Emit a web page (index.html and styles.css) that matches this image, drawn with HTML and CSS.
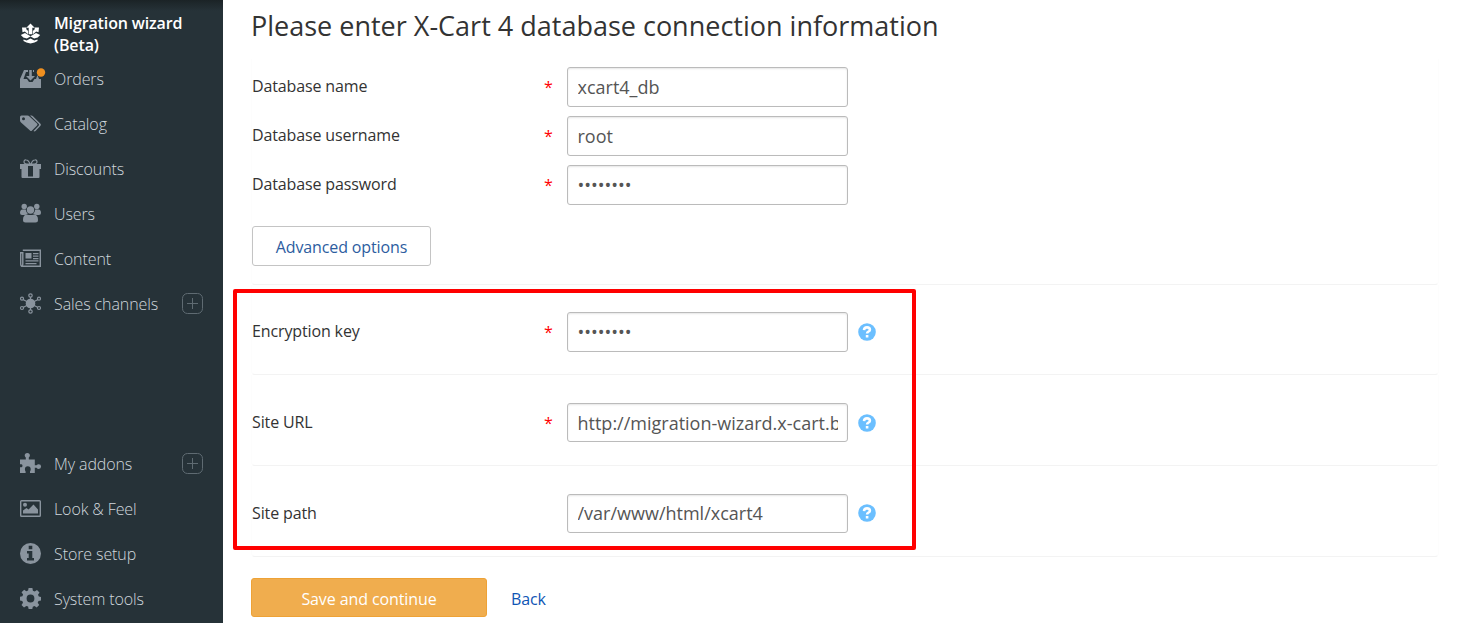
FILE: index.html
```html
<!DOCTYPE html>
<html lang="en">
<head>
<meta charset="utf-8">
<title>Migration wizard</title>
<link rel="stylesheet" href="styles.css">
</head>
<body>
<nav class="sidebar">
  <ul class="menu">
    <li class="item active">
      <svg class="icon" viewBox="0 0 21 21"><path d="M10.500 .5l4.200 4.200h-2.400v6.500H8.700V4.700H6.300zM2 4.500h4.300v1.800l1.800 1.600v3.400L4.800 8.500 2.500 9.300zM19 4.500h-4.300v1.800l-1.800 1.600v3.400l3.300-2.800 2.300.8zM.8 12L5 9.900l5.500 3.400L16 9.900l4.200 2.100-2.500 2.600-3.500.9-3.700-2-3.700 2-3.500-.9zM3.500 16.500l3.200.9 3.800-2 3.800 2 3.200-.9v1.400l-3 1.600-4 1-4-1-3-1.600z"/></svg>
      <span>Migration wizard (Beta)</span>
    </li>
    <li class="item">
      <svg class="icon" viewBox="0 0 21 21"><path d="M4 2h4v2H6l-2.500 7H7l2 3h3.500l2-3H21v9H0v-9z"/><path d="M9.200 2h2.600v6h3.200l-4.500 4.500L6 8h3.200zM13 2h1v2h-1zM17.500 7l1.500 4h-3z"/><circle class="alert" cx="21" cy="4.500" r="4.200"/></svg>
      <span>Orders</span>
    </li>
    <li class="item">
      <svg class="icon" viewBox="0 0 21 21"><path fill-rule="evenodd" d="M0 4q0-1.500 1.500-1.500h6q1 0 2 1l7.500 7q1 1 0 2l-5 5q-1 1-2 0L1 9.500Q0 8.500 0 7.500zM3.500 4.200a1.500 1.500 0 100 3 1.500 1.500 0 000-3z"/><path d="M10 2.500h1.500q.8 0 1.500.8l7.500 7.500q.9 1 0 2L15.500 18q-1 .9-2 0l5.300-5.500q.6-1 0-1.500z"/></svg>
      <span>Catalog</span>
    </li>
    <li class="item">
      <svg class="icon" viewBox="0 0 21 21"><path d="M0 6h21v5h-1.500v8q0 1-1 1H13V8H8v12H2.500q-1 0-1-1v-8H0zM8 18.500h5V20H8z"/><path class="line2" d="M10 6Q4 6.500 4 4t2.200-2Q8.500 2 10 6zM11 6q6 .5 6-2t-2.200-2Q12.500 2 11 6z"/></svg>
      <span>Discounts</span>
    </li>
    <li class="item">
      <svg class="icon" viewBox="0 0 21 21"><circle cx="4.200" cy="3.500" r="2.700"/><circle cx="16.800" cy="3.500" r="2.700"/><circle cx="10.500" cy="7" r="3.700"/><path d="M0 10q0-3.500 2.500-3.500h3.300q.3 3 2 4.300L4.500 12H2q-2 0-2-2zM21 10q0-3.500-2.500-3.500h-3.300q-.3 3-2 4.300l3.300 1.200H19q2 0 2-2zM3 17q0-5.500 4-5.500 3.500 1.200 7 0 4 0 4 5.500 0 2.500-2.500 2.500h-10Q3 19.500 3 17z"/></svg>
      <span>Users</span>
    </li>
    <li class="item">
      <svg class="icon" viewBox="0 0 21 21"><path class="line" d="M2.800 2.300h17.500v16H2.500Q.7 18.300.7 16V4.700h2.100V16q0 2-1 2"/><path d="M5.500 5h6v5.500h-6zM13 5h5.500v1.300H13zM13 7.500h5.500v1.300H13zM13 10h5.500v1.300H13zM5.500 12.300h13v1.300h-13zM5.500 14.900h11v1.300h-11z"/></svg>
      <span>Content</span>
    </li>
    <li class="item">
      <svg class="icon" viewBox="0 0 21 21"><circle cx="10.500" cy="10.500" r="4.800"/><path class="line2" d="M10.500 4v13M3 6.500l15 8M18 6.500l-15 8"/><g class="line2"><circle cx="10.500" cy="2.500" r="1.700"/><circle cx="10.500" cy="18.500" r="1.700"/><circle cx="2" cy="5.700" r="1.500"/><circle cx="19" cy="5.700" r="1.500"/><circle cx="2" cy="15" r="1.500"/><circle cx="19" cy="15" r="1.500"/></g></svg>
      <span>Sales channels</span>
      <svg class="plus" viewBox="0 0 21 21"><rect x=".5" y=".5" width="20" height="20" rx="5"/><path d="M10.500 5v11M5 10.500h11"/></svg>
    </li>
  </ul>
  <ul class="menu bottom">
    <li class="item">
      <svg class="icon" viewBox="0 0 21 21"><path d="M0 6.500h5.800V4.600Q4.700 3.700 4.700 2.600a2.600 2.600 0 115.200 0q0 1.100-1.100 2v1.900h6v5.800h1.700q.9-1.100 2.200-1.100a2.300 2.300 0 110 4.800q-1.300 0-2.200-1.200h-1.700V20H10v-1.500q.7-1 .7-2.300a2.900 2.900 0 10-5.800 0q0 1.300.7 2.300V20H0v-5.700h1.500q1-.4 1-1.600t-1-1.500H0z"/></svg>
      <span>My addons</span>
      <svg class="plus" viewBox="0 0 21 21"><rect x=".5" y=".5" width="20" height="20" rx="5"/><path d="M10.500 5v11M5 10.500h11"/></svg>
    </li>
    <li class="item">
      <svg class="icon" viewBox="0 0 21 21"><rect class="line" x=".7" y="2.700" width="19.600" height="15.600" rx=".8"/><circle cx="5" cy="6.800" r="2"/><path d="M3 15.500v-3l3.500-2.500 2 1.500 5-5 4.500 5v4z"/></svg>
      <span>Look &amp; Feel</span>
    </li>
    <li class="item">
      <svg class="icon" viewBox="0 0 21 21"><path fill-rule="evenodd" d="M10.500 0a10.500 10.500 0 100 21 10.500 10.500 0 000-21zM8.700 2.800h3.600v3.400H8.700zM7 8h5.300v7H14v2.500H7V15h1.700v-4.500H7z"/></svg>
      <span>Store setup</span>
    </li>
    <li class="item">
      <svg class="icon" viewBox="0 0 21 21"><path fill-rule="evenodd" d="M8.600 0h3.800l.5 2.700 1.800.8L17 2l2.500 2.500L18 6.800l.8 1.700 2.200.4v3.700l-2.500.4-.8 1.800 1.500 2.200-2.500 2.500-2.200-1.500-1.700.7-.5 2.300H8.600l-.5-2.400-1.800-.7L4 19.500 1.500 17 3 14.700l-.7-1.800L0 12.500V8.700l2.400-.5.7-1.700L1.500 4.300 4.200 1.700 6.300 3.300l1.800-.7zM10.500 6.600a3.900 3.900 0 100 7.800 3.900 3.900 0 000-7.800z"/></svg>
      <span>System tools</span>
    </li>
  </ul>
</nav>
<main class="content">
  <h1 class="title">Please enter X-Cart 4 database connection information</h1>
  <form class="form">
    <section class="panel database">
      <label class="row"><span class="name">Database name</span><span class="star">*</span><input class="field" type="text" value="xcart4_db"></label>
      <label class="row"><span class="name">Database username</span><span class="star">*</span><input class="field" type="text" value="root"></label>
      <label class="row"><span class="name">Database password</span><span class="star">*</span><input class="field" type="password" value="password"></label>
      <button class="advanced" type="button">Advanced options</button>
    </section>
    <section class="panel key">
      <label class="row"><span class="name">Encryption key</span><span class="star">*</span><input class="field" type="password" value="password"><svg class="help" viewBox="0 0 18 18"><circle cx="9" cy="9" r="8.800"/><path d="M6 7.100Q6.200 4.400 9 4.400t2.900 2.300Q11.900 8 10.400 8.600 9.100 9.200 9.100 10.600M9.100 12v2.500"/></svg></label>
    </section>
    <section class="panel site">
      <label class="row"><span class="name">Site URL</span><span class="star">*</span><input class="field" type="text" value="http://migration-wizard.x-cart.biz"><svg class="help" viewBox="0 0 18 18"><circle cx="9" cy="9" r="8.800"/><path d="M6 7.100Q6.200 4.400 9 4.400t2.900 2.300Q11.900 8 10.400 8.600 9.100 9.200 9.100 10.600M9.100 12v2.500"/></svg></label>
    </section>
    <section class="panel site path">
      <label class="row"><span class="name">Site path</span><span class="star"></span><input class="field" type="text" value="/var/www/html/xcart4"><svg class="help" viewBox="0 0 18 18"><circle cx="9" cy="9" r="8.800"/><path d="M6 7.100Q6.200 4.400 9 4.400t2.900 2.300Q11.900 8 10.400 8.600 9.100 9.200 9.100 10.600M9.100 12v2.500"/></svg></label>
    </section>
    <div class="actions">
      <button class="save" type="button">Save and continue</button>
      <a class="back" href="#">Back</a>
    </div>
  </form>
  <div class="highlight"></div>
</main>
</body>
</html>
```
FILE: styles.css
```css
* { box-sizing: border-box; }

body {
  display: flex;
  height: 623px;
  margin: 0;
  overflow: hidden;
  background: #fff;
  color: #333;
  font: 16px/22px "Open Sans", "Noto Sans", sans-serif;
}

.sidebar {
  display: flex;
  flex: none;
  flex-direction: column;
  justify-content: space-between;
  width: 223px;
  padding: 12px 20px 2px;
  background: linear-gradient(#1b2326, #263238 11px);
  color: #d0d7dd;
  font-weight: 300;
  letter-spacing: -.1px;
}

.menu {
  margin: 0;
  padding: 0;
  list-style: none;
}

.item {
  display: flex;
  align-items: center;
  height: 45px;
}

.item.active {
  height: 44px;
  color: #fff;
  font-weight: 600;
  letter-spacing: -.13px;
}

.icon {
  flex: none;
  width: 21px;
  height: 21px;
  margin-right: 13px;
  overflow: visible;
  fill: #8a949e;
}

.active .icon {
  margin-bottom: 1px;
  fill: #fff;
}

.icon .alert { fill: #f09020; }
.icon .line { fill: none; stroke: #8a949e; stroke-width: 1.400; }
.icon .line2 { fill: none; stroke: #8a949e; stroke-width: 1.200; }

.plus {
  width: 21px;
  height: 21px;
  margin-left: auto;
  fill: none;
  stroke: #5f6b72;
}

.content {
  position: relative;
  flex: 1;
  padding: 8px 29px 0 28px;
}

.title {
  height: 36px;
  margin: 0 0 15px;
  font-size: 27px;
  font-weight: 400;
  line-height: 36px;
}

.panel {
  border: 1px solid #fdfdfd;
  border-width: 0 1px 1px;
  border-bottom-color: #f3f3f3;
  border-radius: 0 0 4px 4px;
}

.database { height: 226px; padding-top: 8px; }
.key { height: 90px; padding-top: 27px; }
.site { height: 91px; padding-top: 28px; }

.row {
  display: flex;
  height: 40px;
  margin-bottom: 9px;
}

.site .row { height: 39px; }

.name {
  width: 292px;
  padding-top: 8px;
  letter-spacing: -.13px;
}

.star {
  width: 23px;
  padding-top: 9px;
  color: #f00;
}

.field {
  width: 281px;
  padding: 0 9px 0 9.500px;
  border: 1px solid #bbb;
  border-radius: 3px;
  outline: 0;
  background: #fff;
  box-shadow: inset 0 1px 2px rgba(0, 0, 0, .1);
  color: #555;
  font: 18px "Open Sans", "Noto Sans", sans-serif;
}

.site .field { padding-top: 1px; }

.path .field {
  padding-top: 0;
  padding-bottom: 1px;
}

.help {
  width: 18px;
  height: 18px;
  margin: 11px 0 0 10px;
  fill: #6bbfff;
}

.path .help { margin-top: 10px; }
.help path { fill: none; stroke: #fff; stroke-width: 2.600; }

.advanced {
  display: block;
  width: 179px;
  height: 40px;
  margin-top: 21px;
  padding: 2px 0 0;
  border: 1px solid #c4c4c4;
  border-radius: 3px;
  background: #fff;
  color: #2d5d9f;
  font: inherit;
  letter-spacing: -.13px;
}

.actions {
  display: flex;
  gap: 24px;
  align-items: center;
  margin-top: 21px;
}

.save {
  width: 236px;
  height: 39px;
  padding: 2px 0 0;
  border: 1px solid #eea236;
  border-radius: 3px;
  background: #f0ad4e;
  color: #fff;
  font: inherit;
  letter-spacing: -.1px;
}

.back {
  padding-top: 3px;
  color: #0f55b5;
  letter-spacing: -.13px;
  text-decoration: none;
}

/* Frame drawn over the three connection settings */
.highlight {
  position: absolute;
  top: 289px;
  left: 10px;
  width: 683px;
  height: 261px;
  border: 4px solid #f00;
  border-radius: 2px;
  pointer-events: none;
}
```
